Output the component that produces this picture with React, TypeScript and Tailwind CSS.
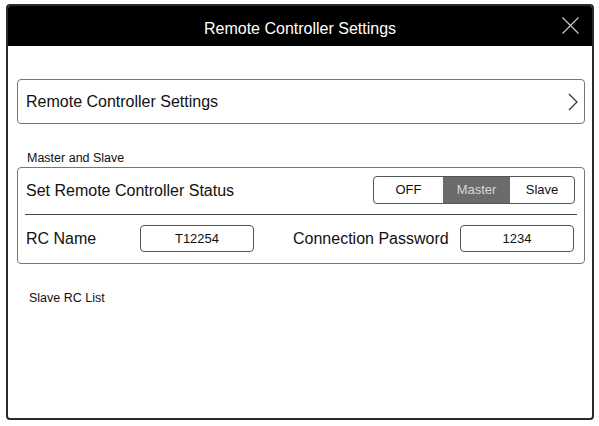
export default function App() {
  return (
    <div className="w-[599px] h-[426px] bg-white pt-[4px] pl-[6px] font-['Liberation_Sans',Arial,sans-serif] text-[#111]">
      <div className="w-[588px] h-[416px] border-2 border-[#2a2a2a] rounded-[4px] overflow-hidden flex flex-col">
        <div className="h-[40px] bg-black relative flex items-center justify-center pt-[6px] shrink-0">
          <span className="text-white text-[16px]">Remote Controller Settings</span>
          <svg className="absolute right-[13px] top-[11px]" width="17" height="17" viewBox="0 0 17 17">
            <path d="M0.5 0.5 L16.5 16.5 M16.5 0.5 L0.5 16.5" stroke="#c8c8c8" strokeWidth="1.2" fill="none" />
          </svg>
        </div>

        <div className="flex flex-col pl-[9px] pr-[7px]">
          <button className="mt-[33px] h-[45px] border border-[#777] rounded-[4px] flex items-center justify-between pl-[8px] pr-[6px] text-[16px] text-left">
            <span>Remote Controller Settings</span>
            <svg width="10" height="18" viewBox="0 0 10 18">
              <polyline points="1,1 9,9 1,17" stroke="#333" strokeWidth="1.2" fill="none" />
            </svg>
          </button>

          <div className="mt-[26px] h-[16px] pl-[10px] text-[12.5px] leading-[16px]">Master and Slave</div>

          <div className="mt-[1px] h-[97px] border border-[#777] rounded-[4px] flex flex-col px-[7px]">
            <div className="h-[47px] flex items-center justify-between pl-[1px] pr-[2px] border-b border-[#444]">
              <span className="text-[16px]">Set Remote Controller Status</span>
              <div className="flex h-[28px] border border-[#555] rounded-[4px] overflow-hidden text-[13px] mt-[-3px]">
                <div className="w-[69px] flex items-center justify-center">OFF</div>
                <div className="w-[67px] flex items-center justify-center bg-[#6b6b6b] text-[#d6d6d6]">Master</div>
                <div className="w-[64px] flex items-center justify-center">Slave</div>
              </div>
            </div>
            <div className="flex-1 flex items-center pl-[1px] pb-[1px]">
              <span className="text-[16px] w-[114px]">RC Name</span>
              <div className="w-[114px] h-[27px] border border-[#555] rounded-[4px] flex items-center justify-center text-[13px]">T12254</div>
              <span className="text-[16px] ml-[39px] w-[167px]">Connection Password</span>
              <div className="w-[114px] h-[27px] border border-[#555] rounded-[4px] flex items-center justify-center text-[13px]">1234</div>
            </div>
          </div>

          <div className="mt-[26px] pl-[12px] text-[12.5px] leading-[16px]">Slave RC List</div>
        </div>
      </div>
    </div>
  );
}
